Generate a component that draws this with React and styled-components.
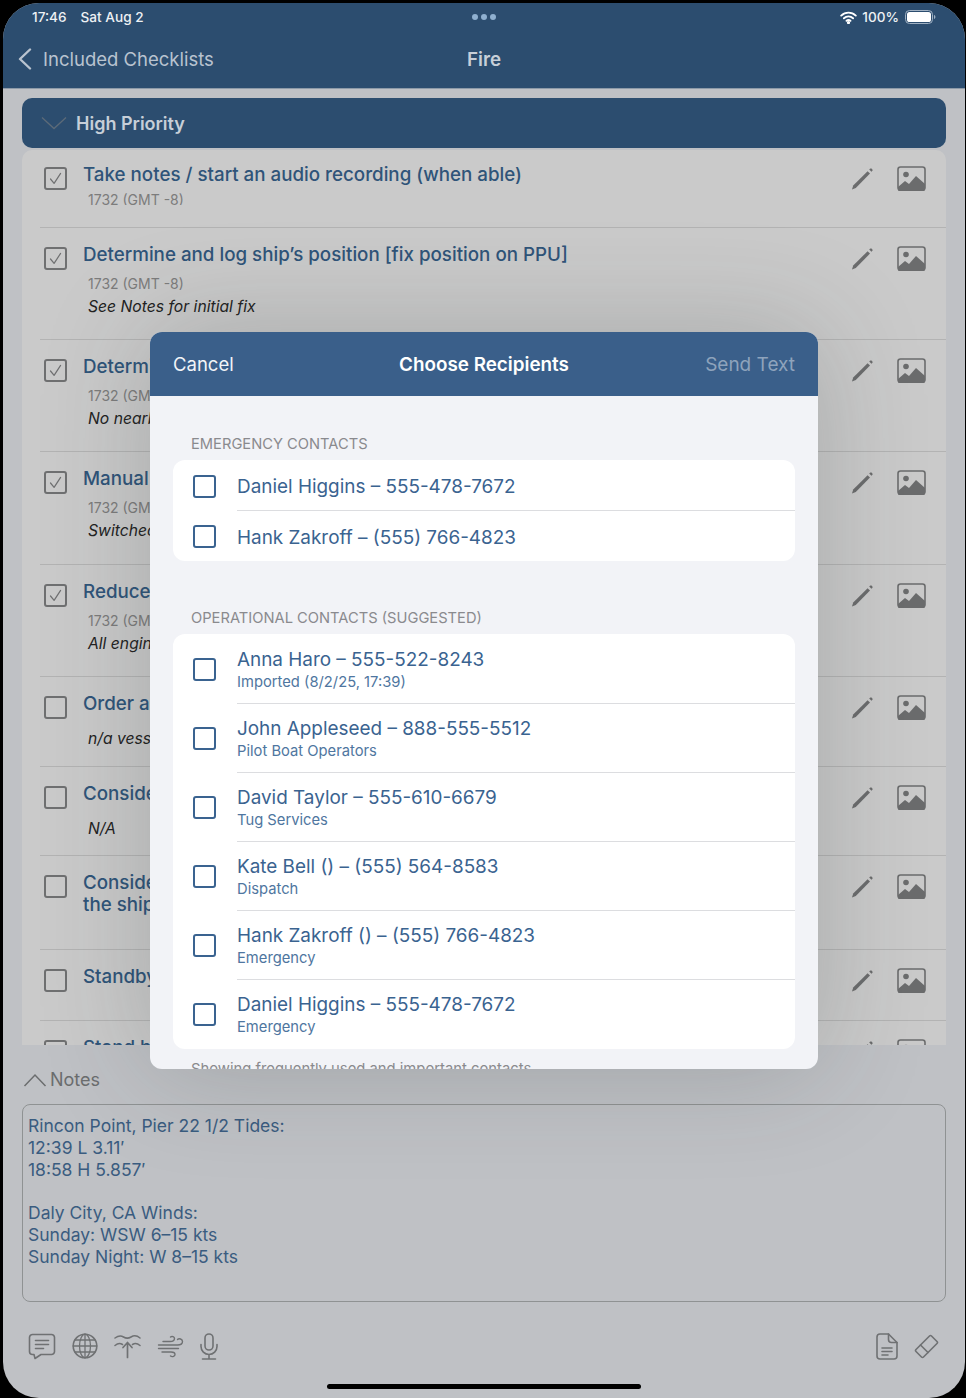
import styled, { createGlobalStyle } from "styled-components"

const checklist = [
    { height: 78, first: true, checked: true, title: "Take notes / start an audio recording (when able)", time: "1732 (GMT -8)", clipTime: true },
    { height: 112, checked: true, title: "Determine and log ship’s position [fix position on PPU]", time: "1732 (GMT -8)", note: "See Notes for initial fix" },
    { height: 112, checked: true, title: "Determine", time: "1732 (GMT -8)", note: "No nearby" },
    { height: 113, checked: true, title: "Manual", time: "1732 (GMT -8)", note: "Switched" },
    { height: 112, checked: true, title: "Reduce", time: "1732 (GMT -8)", note: "All engines" },
    { height: 90, title: "Order a", note: "n/a vessel" },
    { height: 89, title: "Consider", note: "N/A" },
    { height: 94, title: "Consider\nthe ship" },
    { height: 71, title: "Standby" },
    { height: 71, title: "Stand by" },
]

const emergencyContacts = [
    { name: "Daniel Higgins – 555-478-7672" },
    { name: "Hank Zakroff – (555) 766-4823" },
]

const operationalContacts = [
    { name: "Anna Haro – 555-522-8243", detail: "Imported (8/2/25, 17:39)" },
    { name: "John Appleseed – 888-555-5512", detail: "Pilot Boat Operators" },
    { name: "David Taylor – 555-610-6679", detail: "Tug Services" },
    { name: "Kate Bell () – (555) 564-8583", detail: "Dispatch" },
    { name: "Hank Zakroff () – (555) 766-4823", detail: "Emergency" },
    { name: "Daniel Higgins – 555-478-7672", detail: "Emergency" },
]

const notesText = `Rincon Point, Pier 22 1/2 Tides:
12:39 L 3.11′
18:58 H 5.857′

Daly City, CA Winds:
Sunday: WSW 6–15 kts
Sunday Night: W 8–15 kts`

function Line({ d, w = 1.6 }) {
    return <path d={d} fill="none" stroke="currentColor" strokeWidth={w} strokeLinecap="round" strokeLinejoin="round" />
}

function WifiIcon() {
    return (
        <svg width="17" height="13" viewBox="0 0 17 13" fill="none" stroke="#fff" strokeWidth="1.9" strokeLinecap="round">
            <path d="M1.2 4.6C5.4.6 11.6.6 15.8 4.6" />
            <path d="M3.9 7.3c2.7-2.4 6.5-2.4 9.2 0" />
            <path d="M6.5 9.8c1.2-1 2.8-1 4 0" />
            <circle cx="8.5" cy="11.6" r=".7" fill="#fff" />
        </svg>
    )
}

function BatteryIcon() {
    return (
        <svg width="31" height="14" viewBox="0 0 31 14">
            <rect x=".5" y=".5" width="27" height="13" rx="4" fill="none" stroke="#9fb0c2" />
            <rect x="2" y="2" width="24" height="10" rx="2.6" fill="#fff" />
            <path d="M29 5v4c.9-.3 1.4-1.1 1.4-2s-.5-1.7-1.4-2z" fill="#9fb0c2" />
        </svg>
    )
}

function PencilIcon() {
    return (
        <svg width="24" height="24" viewBox="0 -1 24 24">
            <path d="M2 22.5l1.2-4L17.6 4.2l2.4 2.4L5.8 20.9z" fill="#6b6c6d" />
            <path d="M19.2 2.6l.8-.8c.5-.5 1.3-.5 1.8 0l.4.4c.5.5.5 1.3 0 1.8l-.8.8z" fill="#6b6c6d" />
        </svg>
    )
}

function PictureIcon() {
    return (
        <svg width="29" height="25" viewBox="0 0 29 25">
            <rect x="1" y="1" width="27" height="23" rx="2.5" fill="none" stroke="#6b6c6d" strokeWidth="1.6" />
            <circle cx="9" cy="8.5" r="2.8" fill="#6b6c6d" />
            <path d="M1 21l7-6 4 3 7-8 9 8v5.5a1.5 1.5 0 0 1-1.5 1.5h-24A1.5 1.5 0 0 1 1 23z" fill="#6b6c6d" />
        </svg>
    )
}

function CheckMark() {
    return (
        <svg width="15" height="15" viewBox="0 0 15 15" fill="none" stroke="#6f7071" strokeWidth="1.2" strokeLinecap="round" strokeLinejoin="round">
            <path d="M2.5 8l3.6 4.4L12.6 2.4" />
        </svg>
    )
}

function ChatIcon() {
    return (
        <ToolIcon width="28" height="27" viewBox="0 0 28 27">
            <Line d="M4.5 1.5h19a3 3 0 0 1 3 3v14a3 3 0 0 1-3 3H13l-6 4c-.4-1.6-.7-2.9-1-4H4.5a3 3 0 0 1-3-3v-14a3 3 0 0 1 3-3z" />
            <Line d="M7.5 7.5h13M7.5 11.5h13M7.5 15.5h8" />
        </ToolIcon>
    )
}

function GlobeIcon() {
    return (
        <ToolIcon width="26" height="26" viewBox="0 0 26 26">
            <circle cx="13" cy="13" r="11.8" fill="none" stroke="currentColor" strokeWidth="1.6" />
            <ellipse cx="13" cy="13" rx="5.5" ry="11.8" fill="none" stroke="currentColor" strokeWidth="1.3" />
            <Line d="M13 1.2v23.6M1.2 13h23.6M3 7h20M3 19h20" w={1.3} />
        </ToolIcon>
    )
}

function TideIcon() {
    return (
        <ToolIcon width="27" height="26" viewBox="0 0 27 26">
            <Line d="M1 5c3.5-2.5 6-2.5 8.5-1s5 1.5 7.5 0 6-1.5 9 1" w={1.5} />
            <Line d="M1 12.5c3-2.5 5-2.5 7.5-1M18.5 11.5c2.5-1.5 4.5-1.5 7.5 1" w={1.5} />
            <Line d="M13.5 24.5V9.5M9 14.5l4.5-5 4.5 5" w={1.7} />
        </ToolIcon>
    )
}

function WindIcon() {
    return (
        <ToolIcon width="27" height="23" viewBox="0 0 27 23">
            <Line d="M6 6.5h7c3 0 4.5-1.2 4.5-3S15 .8 13.5 2" w={1.4} />
            <Line d="M1.5 10h19c3 0 5-1 5-3.5S22 3 20.5 4.5" w={1.4} />
            <Line d="M1.5 13.5h20" w={1.4} />
            <Line d="M5 17h9c3 0 4 1 4 2.5s-2.5 3-4.5 1.5" w={1.4} />
        </ToolIcon>
    )
}

function MicIcon() {
    return (
        <ToolIcon width="18" height="27" viewBox="0 0 18 27">
            <rect x="5" y="1" width="8" height="16" rx="4" fill="none" stroke="currentColor" strokeWidth="1.6" />
            <Line d="M1 11.5v2a8 8 0 0 0 16 0v-2M9 21.5V26M2.5 26h13" />
        </ToolIcon>
    )
}

function DocumentIcon() {
    return (
        <ToolIcon width="22" height="27" viewBox="0 0 22 27">
            <Line d="M4 1h8.5L21 9.5V23a3 3 0 0 1-3 3H4a3 3 0 0 1-3-3V4a3 3 0 0 1 3-3z" />
            <Line d="M12.5 1v5.5a3 3 0 0 0 3 3H21M6 15h10M6 18.5h10M6 22h6" />
        </ToolIcon>
    )
}

function EraserIcon() {
    return (
        <ToolIcon width="25" height="25" viewBox="0 0 25 25">
            <Line d="M2 15.5L15.5 2c.6-.6 1.4-.6 2 0L23 7.5c.6.6.6 1.4 0 2L9.5 23c-.6.6-1.4.6-2 0L2 17.5c-.6-.6-.6-1.4 0-2z" />
            <Line d="M6.5 11l7.5 7.5" />
        </ToolIcon>
    )
}

function ChecklistRow({ item }) {
    return (
        <Row $height={item.height} $first={item.first}>
            <CheckBox>{item.checked && <CheckMark />}</CheckBox>
            <RowBody>
                <RowTitle>{item.title}</RowTitle>
                {item.time && <RowTime $clip={item.clipTime}>{item.time}</RowTime>}
                {item.note && <RowNote $alone={!item.time}>{item.note}</RowNote>}
            </RowBody>
            <RowActions>
                <PencilIcon />
                <PictureIcon />
            </RowActions>
        </Row>
    )
}

function ContactRow({ contact }) {
    return (
        <Contact $tall={!!contact.detail}>
            <ContactBox />
            <ContactText $tall={!!contact.detail}>
                <ContactName>{contact.name}</ContactName>
                {contact.detail && <ContactDetail>{contact.detail}</ContactDetail>}
            </ContactText>
        </Contact>
    )
}

function App() {
    return (
        <>
            <GlobalStyle />
            <Screen>
                <TopBar>
                    <StatusBar>
                        <StatusLeft>
                            <span>17:46</span>
                            <span>Sat Aug 2</span>
                        </StatusLeft>
                        <Dots>
                            <i /><i /><i />
                        </Dots>
                        <StatusRight>
                            <WifiIcon />
                            <span>100%</span>
                            <BatteryIcon />
                        </StatusRight>
                    </StatusBar>
                    <NavBar>
                        <BackLink>
                            <svg width="14" height="22" viewBox="0 0 14 22" fill="none" stroke="#b9c3cf" strokeWidth="2.4" strokeLinecap="round" strokeLinejoin="round">
                                <path d="M12 1.5L2 11l10 9.5" />
                            </svg>
                            Included Checklists
                        </BackLink>
                        <NavTitle>Fire</NavTitle>
                    </NavBar>
                </TopBar>

                <Content>
                    <SectionHeader>
                        <svg width="26" height="14" viewBox="0 0 26 14" fill="none" stroke="#5c6a78" strokeWidth="1.3">
                            <path d="M1 1.5L13 12.5 25 1.5" />
                        </svg>
                        High Priority
                    </SectionHeader>
                    <ChecklistPanel>
                        {checklist.map((item) => (
                            <ChecklistRow key={item.title} item={item} />
                        ))}
                    </ChecklistPanel>

                    <NotesLabel>
                        <svg width="24" height="14" viewBox="0 0 24 14" fill="none" stroke="#6b6d6e" strokeWidth="1.5">
                            <path d="M1.5 13L12 2l10.5 11" />
                        </svg>
                        Notes
                    </NotesLabel>
                    <NotesBox>{notesText}</NotesBox>

                    <Toolbar>
                        <ToolGroup>
                            <ChatIcon />
                            <GlobeIcon />
                            <TideIcon />
                            <WindIcon />
                            <MicIcon />
                        </ToolGroup>
                        <ToolGroup>
                            <DocumentIcon />
                            <EraserIcon />
                        </ToolGroup>
                    </Toolbar>
                </Content>

                <Modal>
                    <ModalHeader>
                        <ModalAction>Cancel</ModalAction>
                        <ModalTitle>Choose Recipients</ModalTitle>
                        <ModalAction $disabled>Send Text</ModalAction>
                    </ModalHeader>
                    <ModalBody>
                        <GroupLabel>EMERGENCY CONTACTS</GroupLabel>
                        <ContactGroup>
                            {emergencyContacts.map((contact) => (
                                <ContactRow key={contact.name} contact={contact} />
                            ))}
                        </ContactGroup>
                        <GroupLabel $spaced>OPERATIONAL CONTACTS (SUGGESTED)</GroupLabel>
                        <ContactGroup>
                            {operationalContacts.map((contact) => (
                                <ContactRow key={contact.name} contact={contact} />
                            ))}
                        </ContactGroup>
                        <GroupFooter>Showing frequently used and important contacts</GroupFooter>
                    </ModalBody>
                </Modal>

                <HomeIndicator />
            </Screen>
        </>
    )
}

const GlobalStyle = createGlobalStyle`
    html, body {
        margin: 0;
        background: #000;
    }
    * {
        box-sizing: border-box;
    }
`

const Screen = styled.div`
    position: relative;
    width: 962px;
    height: 1395px;
    margin: 3px 0 0 3px;
    border-radius: 36px;
    overflow: hidden;
    background: #bfc1c5;
    font-family: Inter, "Liberation Sans", sans-serif;
`

const TopBar = styled.header`
    height: 86px;
    background: #2c4d6f;
    border-bottom: 1px solid #8d9aa8;
`

const StatusBar = styled.div`
    position: relative;
    display: flex;
    justify-content: space-between;
    align-items: center;
    height: 28px;
    padding: 0 29px;
    color: #eef1f4;
    font-size: 13.6px;
    font-weight: 500;
`

const StatusLeft = styled.div`
    display: flex;
    gap: 14px;
`

const StatusRight = styled.div`
    display: flex;
    align-items: center;
    gap: 5px;
    & > svg:last-child {
        margin-left: 1px;
    }
`

const Dots = styled.div`
    position: absolute;
    left: 469px;
    top: 11px;
    display: flex;
    gap: 3px;
    & > i {
        width: 6px;
        height: 6px;
        border-radius: 50%;
        background: #8fb0d0;
    }
`

const NavBar = styled.nav`
    position: relative;
    display: flex;
    justify-content: center;
    align-items: center;
    height: 56px;
`

const BackLink = styled.div`
    position: absolute;
    left: 15px;
    top: 17px;
    display: flex;
    align-items: center;
    gap: 11px;
    color: #b9c3cf;
    font-size: 18.5px;
`

const NavTitle = styled.div`
    color: #c7cfd8;
    font-size: 18.8px;
    font-weight: 600;
`

const Content = styled.main`
    padding: 9px 19px 0;
    width: 962px;
`

const SectionHeader = styled.div`
    display: flex;
    align-items: center;
    gap: 9px;
    width: 924px;
    height: 50px;
    padding-left: 19px;
    border-radius: 10px;
    background: #2c4d6f;
    color: #c7cfd8;
    font-size: 18px;
    font-weight: 600;
`

const ChecklistPanel = styled.section`
    width: 924px;
    height: 895px;
    margin-top: 2px;
    border-radius: 10px 10px 0 0;
    background: #cacaca;
    overflow: hidden;
`

const Row = styled.div`
    display: flex;
    height: ${(p) => p.$height}px;
    margin-left: 18px;
    padding: ${(p) => (p.$first ? "13px" : "15px")} 20px 0 4px;
    border-bottom: 1px solid #b3b3b3;
`

const CheckBox = styled.span`
    display: flex;
    flex: none;
    align-items: center;
    justify-content: center;
    width: 23px;
    height: 23px;
    margin-top: 4px;
    border: 2px solid #6f7071;
    border-radius: 3px;
`

const RowBody = styled.div`
    flex: 1;
    min-width: 0;
    padding: 1px 0 0 16px;
`

const RowTitle = styled.div`
    color: #2f5479;
    font-size: 18.75px;
    font-weight: 500;
    line-height: 22px;
    white-space: pre-line;
`

const RowTime = styled.div`
    height: ${(p) => (p.$clip ? "15px" : "20px")};
    margin: ${(p) => (p.$clip ? "4px" : "8px")} 0 1px 5px;
    color: #7c7c7c;
    font-size: 14px;
    line-height: 20px;
    overflow: hidden;
`

const RowNote = styled.div`
    margin: ${(p) => (p.$alone ? "12px" : "0")} 0 0 5px;
    color: #222;
    font-size: 15.7px;
    font-style: italic;
    line-height: 23px;
`

const RowActions = styled.div`
    display: flex;
    flex: none;
    gap: 23px;
    align-items: flex-start;
    padding-top: 3px;
`

const NotesLabel = styled.div`
    display: flex;
    align-items: center;
    gap: 3px;
    height: 59px;
    padding: 20px 0 10px 1px;
    color: #6b6d6e;
    font-size: 18px;
`

const NotesBox = styled.div`
    width: 924px;
    height: 198px;
    padding: 10px 5px;
    border: 1px solid #8f9293;
    border-radius: 8px;
    color: #3a5c80;
    font-size: 17.5px;
    line-height: 21.8px;
    white-space: pre-wrap;
`

const Toolbar = styled.div`
    display: flex;
    justify-content: space-between;
    align-items: center;
    height: 30px;
    margin-top: 29px;
    padding: 0 7px 0 6px;
`

const ToolGroup = styled.div`
    display: flex;
    align-items: center;
    gap: 16px;
`

const ToolIcon = styled.svg`
    flex: none;
    color: #6f7173;
`

const Modal = styled.div`
    position: absolute;
    left: 147px;
    top: 329px;
    width: 668px;
    height: 737px;
    border-radius: 12px;
    background: #f2f3f7;
    box-shadow: 0 0 110px rgba(40, 50, 50, 0.22);
    overflow: hidden;
`

const ModalHeader = styled.div`
    display: grid;
    grid-template-columns: 1fr auto 1fr;
    align-items: center;
    height: 64px;
    padding: 0 23px;
    background: #3a5f8a;
`

const ModalAction = styled.div`
    color: ${(p) => (p.$disabled ? "#8ea3bc" : "#f2f5f8")};
    font-size: ${(p) => (p.$disabled ? "19px" : "18.5px")};
    text-align: ${(p) => (p.$disabled ? "right" : "left")};
`

const ModalTitle = styled.div`
    color: #fff;
    font-size: 18.85px;
    font-weight: 600;
`

const ModalBody = styled.div`
    padding: 0 23px;
`

const GroupLabel = styled.div`
    height: 20px;
    margin: ${(p) => (p.$spaced ? "46px" : "37px")} 0 7px 18px;
    color: #8a8a8e;
    font-size: 14.7px;
    line-height: 22px;
`

const ContactGroup = styled.div`
    padding-top: 1px;
    border-radius: 12px;
    background: #fff;
`

const Contact = styled.div`
    display: flex;
    align-items: center;
    height: ${(p) => (p.$tall ? "69px" : "50px")};
    padding-left: 20px;
`

const ContactBox = styled.span`
    flex: none;
    width: 23px;
    height: 23px;
    border: 2px solid #3a6390;
    border-radius: 3px;
`

const ContactText = styled.div`
    display: flex;
    flex: 1;
    flex-direction: column;
    justify-content: center;
    align-self: stretch;
    margin-left: 21px;
    padding-top: ${(p) => (p.$tall ? "1px" : "3px")};
    ${Contact}:not(:last-child) & {
        border-bottom: 1px solid #dcdde0;
    }
`

const ContactName = styled.div`
    color: #3a6390;
    font-size: 18.9px;
    line-height: 24px;
`

const ContactDetail = styled.div`
    color: #4f76a0;
    font-size: 14.75px;
    line-height: 20px;
`

const GroupFooter = styled.div`
    margin: 10px 0 0 18px;
    color: #8a8a8e;
    font-size: 14.8px;
    line-height: 20px;
`

const HomeIndicator = styled.div`
    position: absolute;
    left: 324px;
    top: 1381px;
    width: 314px;
    height: 5px;
    border-radius: 3px;
    background: #000;
`

export default App
